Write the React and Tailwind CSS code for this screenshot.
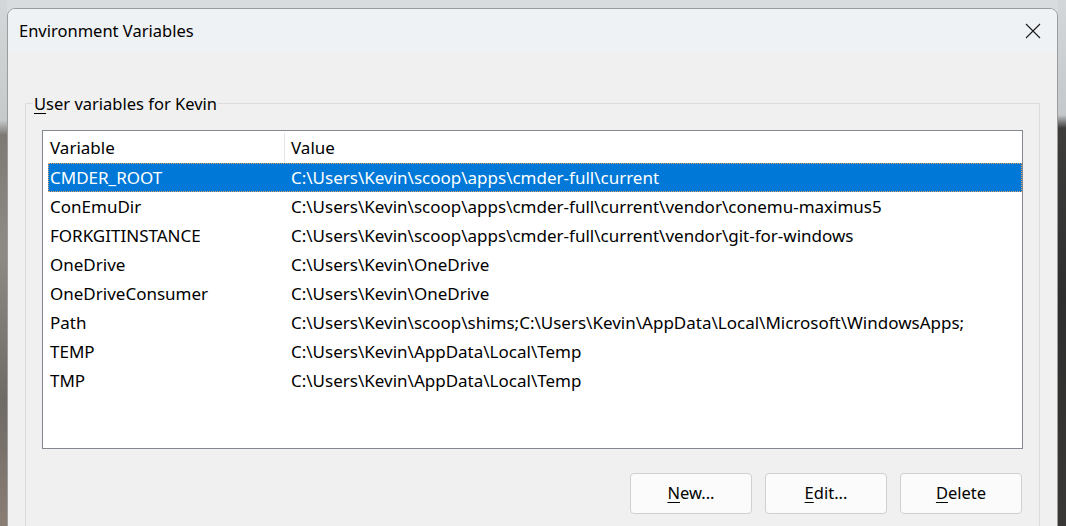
import React from 'react';

const ROWS = [
  ['CMDER_ROOT', 'C:\\Users\\Kevin\\scoop\\apps\\cmder-full\\current'],
  ['ConEmuDir', 'C:\\Users\\Kevin\\scoop\\apps\\cmder-full\\current\\vendor\\conemu-maximus5'],
  ['FORKGITINSTANCE', 'C:\\Users\\Kevin\\scoop\\apps\\cmder-full\\current\\vendor\\git-for-windows'],
  ['OneDrive', 'C:\\Users\\Kevin\\OneDrive'],
  ['OneDriveConsumer', 'C:\\Users\\Kevin\\OneDrive'],
  ['Path', 'C:\\Users\\Kevin\\scoop\\shims;C:\\Users\\Kevin\\AppData\\Local\\Microsoft\\WindowsApps;'],
  ['TEMP', 'C:\\Users\\Kevin\\AppData\\Local\\Temp'],
  ['TMP', 'C:\\Users\\Kevin\\AppData\\Local\\Temp'],
];

function DialogButton({ hotkey, rest }) {
  return (
    <button className="w-[122px] h-[41px] rounded-[4px] border border-[#d0d0d0] bg-[#fbfbfb] text-[16.5px] text-black">
      <span className="underline underline-offset-[3px] decoration-1">{hotkey}</span>
      {rest}
    </button>
  );
}

export default function App() {
  return (
    <div
      className="w-[1066px] h-[526px] overflow-hidden flex"
      style={{ fontFamily: '"Noto Sans", "Open Sans", sans-serif' }}
    >
      {/* desktop wallpaper, left strip */}
      <div className="w-[7px] h-full shrink-0 bg-[linear-gradient(to_bottom,#d3d7d9_0px,#c6cacb_120px,#7d7a76_135px,#8e8a85_250px,#6e6a66_400px,#8a7e74_526px)]" />

      <div className="w-[1051px] shrink-0 h-full bg-[#d8dcdf] pt-[8px]">
        <div className="h-[540px] rounded-t-[8px] border border-[#9c9c9c] bg-[#f0f0f0] overflow-hidden">
          {/* title bar */}
          <div className="h-[44px] flex items-center justify-between bg-[#eff2f4] pl-[11px] pr-[16px]">
            <span className="text-[16.5px] text-black">Environment Variables</span>
            <svg width="16" height="16" viewBox="0 0 16 16" className="mt-[-1px]">
              <path d="M1 1 L15 15 M15 1 L1 15" stroke="#1a1a1a" strokeWidth="1.1" fill="none" />
            </svg>
          </div>

          {/* group box */}
          <div className="px-[17px] pt-[39px]">
            <fieldset className="border border-[#dcdcdc] px-[16px] pt-[16px] pb-[20px]">
              <legend className="ml-[-9px] px-[1px] pt-[2px] text-[16.5px] leading-[20px] text-black">
                <span className="underline underline-offset-[3px] decoration-1">U</span>ser variables for Kevin
              </legend>

              <div className="h-[319px] border border-[#828790] bg-white pl-[5px] text-[17px] text-black">
                <div className="flex h-[32px] items-center pt-[1px]">
                  <div className="w-[237px] h-[30px] pl-[2px] border-r border-[#e5e5e5] flex items-center">Variable</div>
                  <div className="pl-[6px]">Value</div>
                </div>
                {ROWS.map(([name, value], i) => (
                  <div
                    key={name}
                    className={
                      i === 0
                        ? 'flex h-[29px] items-center pt-[1px] bg-[#0078d7] text-white border border-dotted border-[#e8a060]'
                        : 'flex h-[29px] items-center pt-[1px] border border-transparent'
                    }
                  >
                    <div className="w-[236px] pl-[1px] whitespace-nowrap">{name}</div>
                    <div className="pl-[6px] whitespace-nowrap">{value}</div>
                  </div>
                ))}
              </div>

              <div className="flex justify-end gap-[13px] mt-[24px] pr-[1px]">
                <DialogButton hotkey="N" rest="ew..." />
                <DialogButton hotkey="E" rest="dit..." />
                <DialogButton hotkey="D" rest="elete" />
              </div>
            </fieldset>
          </div>
        </div>
      </div>

      {/* desktop wallpaper, right strip */}
      <div className="flex-1 h-full bg-[linear-gradient(to_bottom,#d3d7d9_0px,#c4c8ca_115px,#3e3d3c_128px,#2e2e2e_300px,#3a3836_526px)]" />
    </div>
  );
}
